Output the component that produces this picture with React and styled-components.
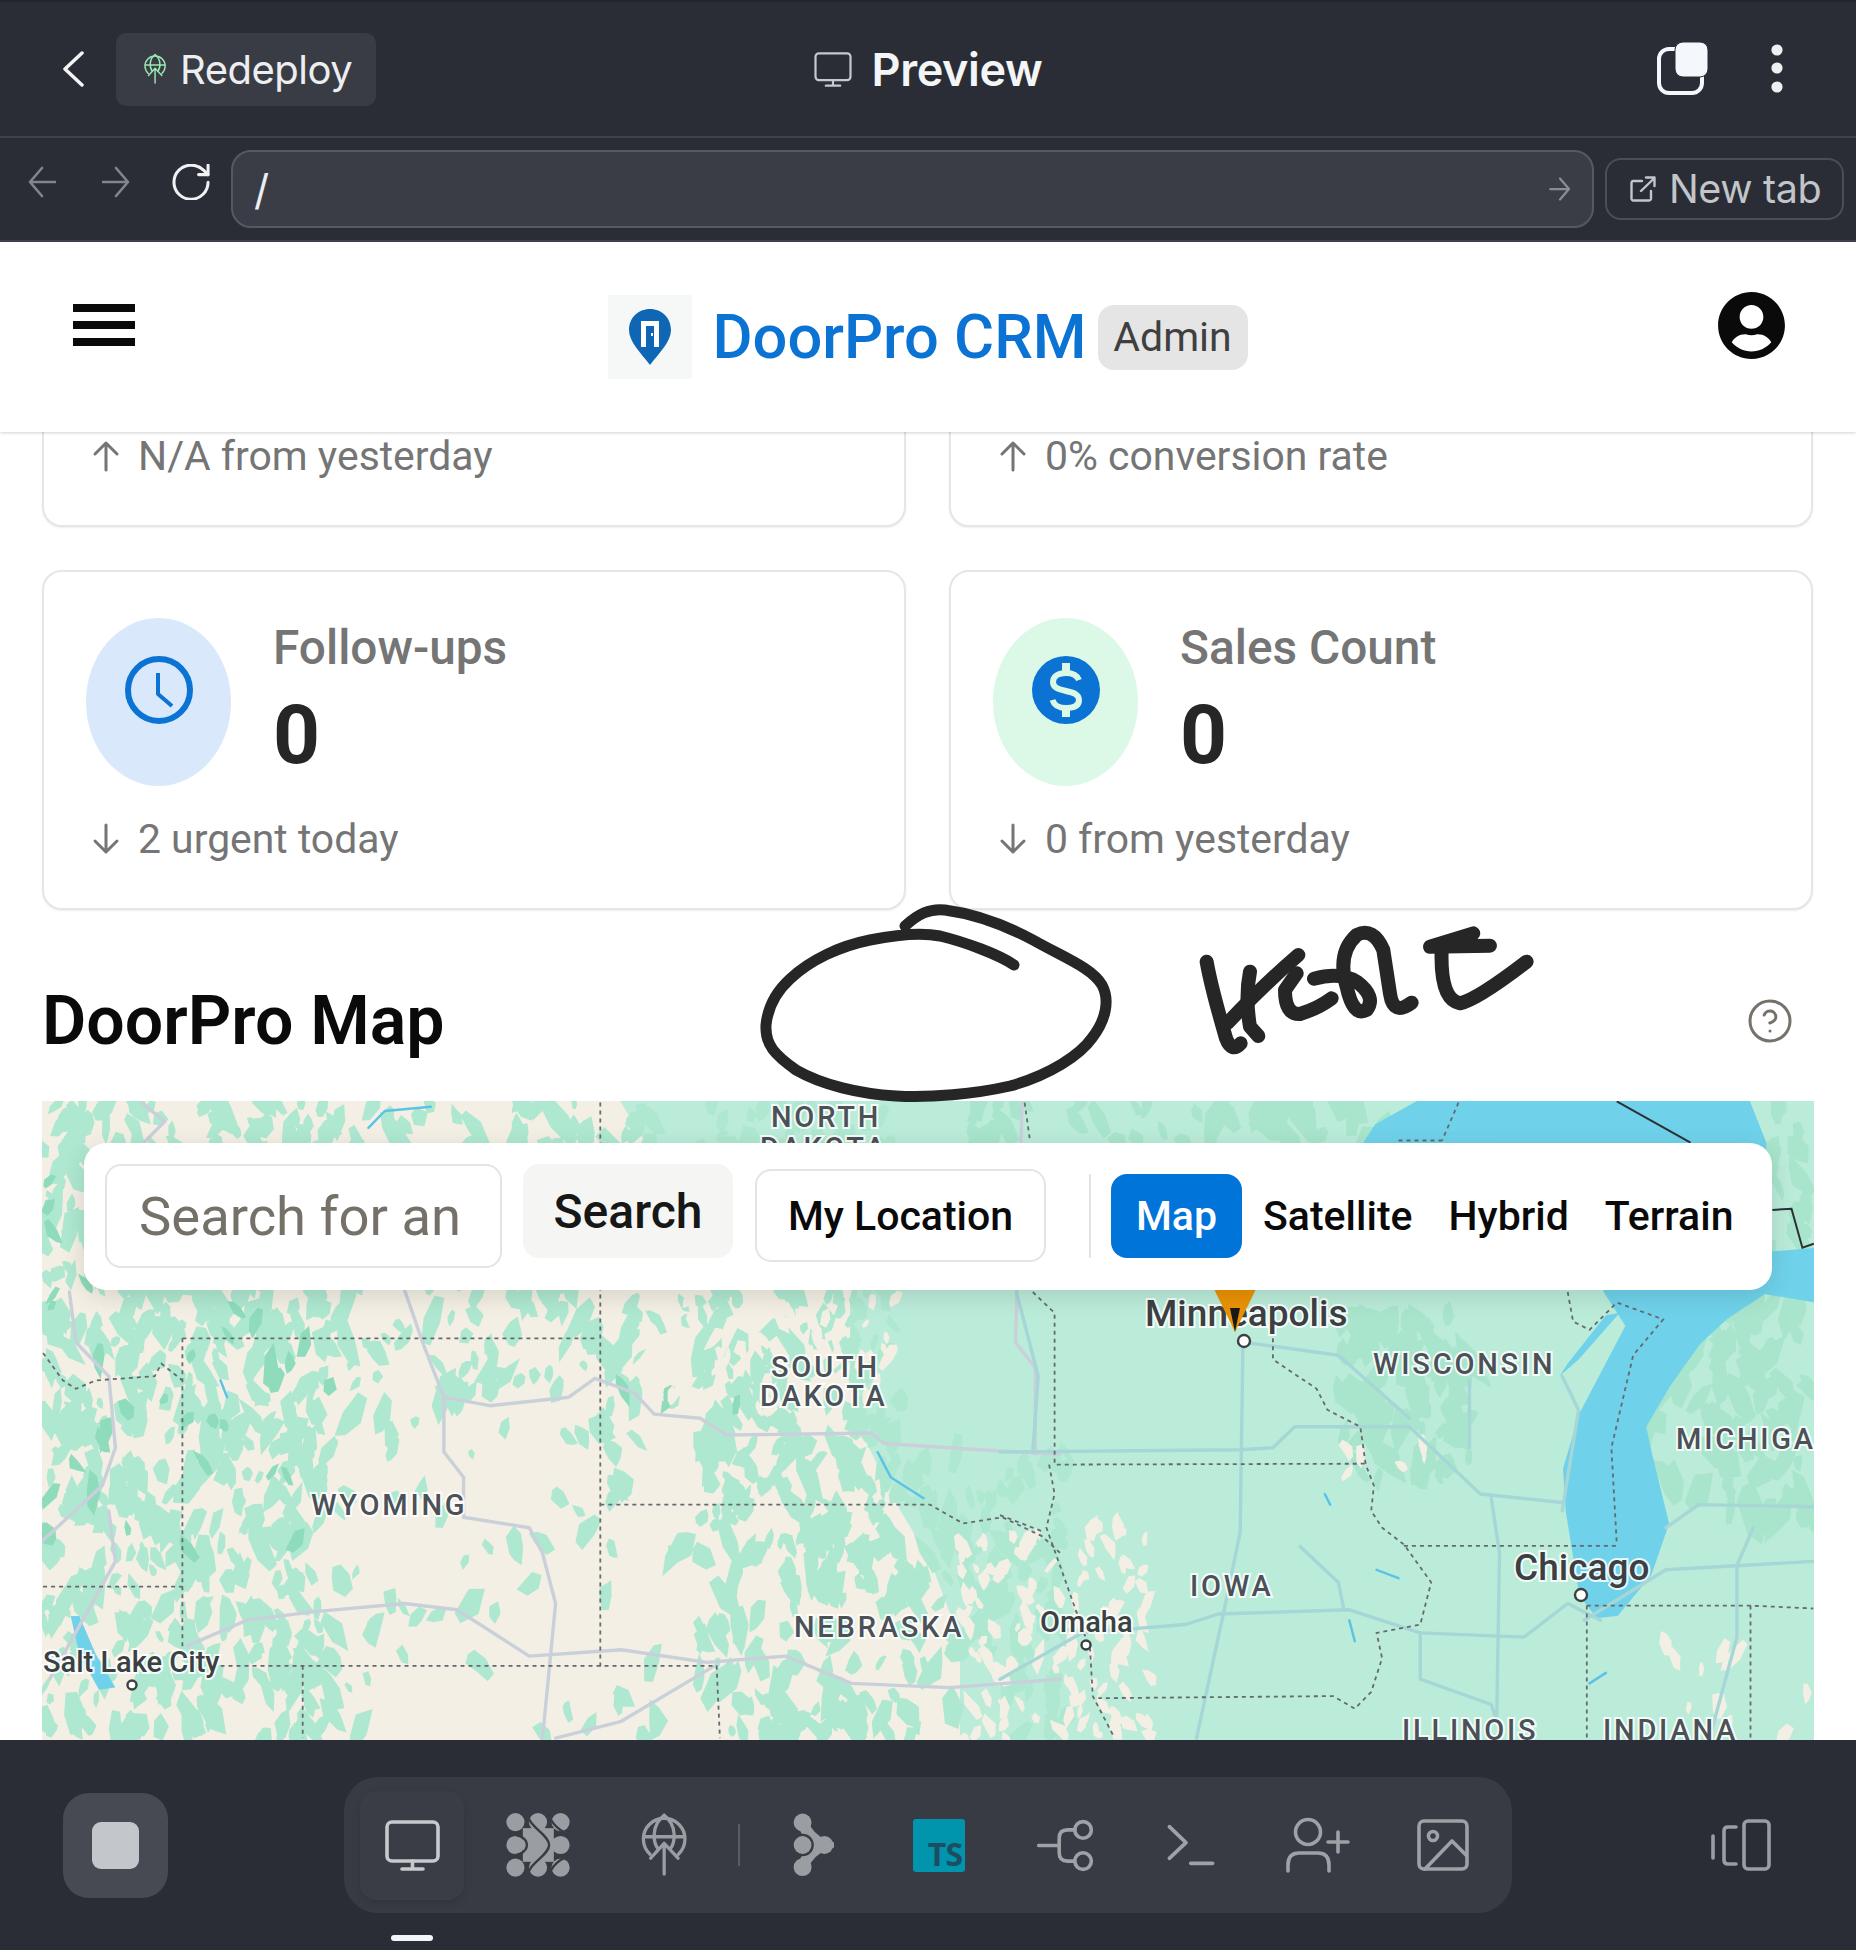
import React from "react";
import styled, { createGlobalStyle } from "styled-components";
import { FaUserCircle } from "react-icons/fa";
import { CircleHelp } from "lucide-react";

const GlobalStyle = createGlobalStyle`
  html, body { margin: 0; padding: 0; background: #fff; }
  body { width: 1856px; height: 1950px; overflow: hidden; font-family: Roboto, "Liberation Sans", sans-serif; }
  * { box-sizing: border-box; }
`;

const Root = styled.div`
  position: relative;
  width: 1856px;
  height: 1950px;
  display: flex;
  flex-direction: column;
  overflow: hidden;
`;

/* ---------- IDE chrome ---------- */
const TopBar = styled.header`
  height: 138px;
  flex: none;
  background: #2a2d35;
  border-top: 2px solid #22242a;
  border-bottom: 2px solid #3f424b;
  display: grid;
  grid-template-columns: 1fr auto 1fr;
  align-items: center;
  font-family: Inter, "Noto Sans", sans-serif;
  color: #f4f5f6;
`;
const TopLeft = styled.div`
  display: flex;
  align-items: center;
  gap: 32px;
  padding-left: 62px;
`;
const RedeployButton = styled.div`
  width: 260px;
  height: 73px;
  border-radius: 10px;
  background: #393c44;
  display: flex;
  align-items: center;
  gap: 13px;
  padding-left: 27px;
  font-size: 40px;
  letter-spacing: -0.5px;
  color: #eceef0;
`;
const PreviewTitle = styled.div`
  display: flex;
  align-items: center;
  gap: 20px;
  font-size: 45px;
  font-weight: 600;
  letter-spacing: -0.4px;
`;
const TopRight = styled.div`
  display: flex;
  justify-content: flex-end;
  align-items: center;
  gap: 62px;
  padding-right: 73px;
`;
const AddressRow = styled.div`
  height: 104px;
  flex: none;
  background: #2a2d35;
  border-bottom: 2px solid #3f424b;
  display: flex;
  align-items: center;
  padding-left: 28px;
  font-family: Inter, "Noto Sans", sans-serif;
`;
const NavSlot = styled.div`
  flex: none;
  display: flex;
  width: ${(p) => p.$w}px;
  margin-top: -15px;
`;
const AddressInput = styled.div`
  width: 1363px;
  height: 78px;
  flex: none;
  margin-right: 11px;
  border: 2px solid #565962;
  border-radius: 20px;
  background: #3a3d45;
  display: flex;
  align-items: center;
  justify-content: space-between;
  padding: 0 21px 0 21px;
  font-size: 42px;
  color: #eceef0;
`;
const NewTabButton = styled.div`
  width: 239px;
  height: 62px;
  flex: none;
  border: 2px solid #4b4e57;
  border-radius: 16px;
  display: flex;
  align-items: center;
  gap: 13px;
  padding-left: 23px;
  color: #c2c5c9;
  font-size: 39.5px;
  letter-spacing: -0.4px;
`;

/* ---------- app header ---------- */
const AppHeader = styled.div`
  height: 190px;
  flex: none;
  position: relative;
  z-index: 2;
  background: #fff;
  box-shadow: 0 1px 3px rgba(0, 0, 0, 0.18);
  display: grid;
  grid-template-columns: 1fr auto 1fr;
  align-items: center;
`;
const Hamburger = styled.div`
  display: flex;
  flex-direction: column;
  gap: 9px;
  width: 62px;
  margin: 0 0 24px 73px;
`;
const HamburgerBar = styled.span`
  display: block;
  height: 8px;
  background: #0a0a0a;
`;
const Brand = styled.div`
  display: flex;
  align-items: center;
`;
const LogoBox = styled.div`
  width: 84px;
  height: 84px;
  background: #f6f7f7;
  display: flex;
  align-items: center;
  justify-content: center;
  margin-right: 20px;
`;
const BrandTitle = styled.div`
  font-size: 61.4px;
  font-weight: 500;
  color: #0a73d4;
  line-height: 84px;
`;
const RoleBadge = styled.div`
  margin-left: 11px;
  width: 150px;
  height: 65px;
  border-radius: 16px;
  background: #e5e5e5;
  color: #3f3f3f;
  font-size: 41px;
  display: flex;
  align-items: center;
  justify-content: center;
`;
const AvatarSlot = styled.div`
  display: flex;
  justify-content: flex-end;
  padding-right: 70px;
  margin-bottom: 24px;
  color: #0a0a0a;
`;

/* ---------- scrolled content ---------- */
const Content = styled.main`
  flex: 1;
  min-height: 0;
  overflow: hidden;
  background: #fff;
`;
const ScrollInner = styled.div`
  margin-top: -245px;
  padding: 0 42px;
`;
const CardGrid = styled.div`
  display: grid;
  grid-template-columns: 864px 864px;
  column-gap: 43px;
  row-gap: 43px;
`;
const StatCard = styled.section`
  height: 340px;
  border: 2px solid #e6e6e6;
  border-radius: 20px;
  background: #fff;
  box-shadow: 0 1px 2px rgba(0, 0, 0, 0.07);
  padding: 47px 41px 45px 42px;
  display: flex;
  flex-direction: column;
  justify-content: flex-end;
`;
const StatTop = styled.div`
  display: flex;
  gap: 42px;
`;
const IconBlob = styled.div`
  width: 145px;
  height: 168px;
  flex: none;
  border-radius: 50%;
  background: ${(p) => p.$bg};
  display: flex;
  justify-content: center;
  padding-top: 38px;
`;
const StatLabel = styled.div`
  font-size: 47.8px;
  font-weight: 500;
  line-height: 60px;
  color: #757575;
`;
const StatValue = styled.div`
  font-size: 82px;
  font-weight: 700;
  line-height: 90px;
  margin-top: 12px;
  color: #262626;
`;
const StatFoot = styled.div`
  margin-top: 29px;
  height: 48px;
  display: flex;
  align-items: center;
  gap: 18px;
  padding-left: 6px;
  font-size: 40.9px;
  color: #757575;
`;
const MapHeading = styled.div`
  height: 191px;
  padding: 31px 20px 0 0;
  display: flex;
  align-items: center;
  justify-content: space-between;
  color: #76716b;
`;
const MapTitle = styled.h2`
  margin: 0;
  font-size: 68px;
  font-weight: 600;
  color: #0a0a0a;
`;
const MapFrame = styled.div`
  position: relative;
  height: 700px;
  overflow: hidden;
`;
const MapCanvas = styled.svg`
  display: block;
`;
const MapLabel = styled.text`
  font-family: Roboto, sans-serif;
  font-size: ${(p) => p.$size || 29}px;
  font-weight: 500;
  letter-spacing: ${(p) => p.$track || 0}px;
  fill: ${(p) => p.$color || "#4c5057"};
  stroke: rgba(255, 255, 255, 0.85);
  stroke-width: 4px;
  paint-order: stroke;
  dominant-baseline: central;
`;
const MapToolbar = styled.div`
  position: absolute;
  top: 42px;
  left: 42px;
  right: 42px;
  height: 147px;
  border-radius: 22px;
  background: #fff;
  box-shadow: 0 6px 24px rgba(0, 0, 0, 0.12);
  display: flex;
  align-items: flex-start;
  padding: 21px 0 0 21px;
`;
const SearchInput = styled.input`
  width: 397px;
  height: 104px;
  flex: none;
  border: 2px solid #e4e4e4;
  border-radius: 16px;
  padding: 0 32px;
  outline: none;
  font-family: Roboto, sans-serif;
  font-size: 54.4px;
  background: #fff;
  &::placeholder { color: #757068; opacity: 1; }
`;
const SearchButton = styled.div`
  margin-left: 21px;
  width: 210px;
  height: 94px;
  flex: none;
  border-radius: 16px;
  background: #f5f5f3;
  color: #171717;
  font-size: 48px;
  font-weight: 500;
  display: flex;
  align-items: center;
  justify-content: center;
`;
const LocationButton = styled.div`
  margin: 5px 0 0 22px;
  width: 291px;
  height: 93px;
  flex: none;
  border: 2px solid #e4e4e4;
  border-radius: 16px;
  color: #0a0a0a;
  font-size: 41px;
  font-weight: 500;
  display: flex;
  align-items: center;
  justify-content: center;
`;
const ToolbarDivider = styled.div`
  margin: 10px 20px 0 43px;
  width: 2px;
  height: 84px;
  background: #e4e4e4;
`;
const ViewGroup = styled.div`
  margin-top: 10px;
  display: flex;
  align-items: center;
`;
const ViewButton = styled.div`
  height: 84px;
  padding: 0 ${(p) => (p.$active ? 0 : 18)}px;
  width: ${(p) => (p.$active ? "131px" : "auto")};
  justify-content: center;
  margin-right: ${(p) => (p.$active ? 3 : 0)}px;
  border-radius: 16px;
  background: ${(p) => (p.$active ? "#0074d9" : "transparent")};
  color: ${(p) => (p.$active ? "#fff" : "#0a0a0a")};
  font-size: 41px;
  font-weight: 500;
  display: flex;
  align-items: center;
`;

/* ---------- bottom dock ---------- */
const BottomBar = styled.footer`
  position: relative;
  z-index: 2;
  height: 210px;
  flex: none;
  background: #2a2d35;
  display: flex;
  align-items: center;
  padding-left: 63px;
`;
const StopButton = styled.div`
  width: 105px;
  height: 105px;
  border-radius: 26px;
  background: #484a53;
  display: flex;
  align-items: center;
  justify-content: center;
  margin-right: 176px;
`;
const StopSquare = styled.span`
  width: 47px;
  height: 47px;
  border-radius: 9px;
  background: #c3c6ca;
`;
const Dock = styled.nav`
  width: 1168px;
  height: 136px;
  border-radius: 34px;
  background: #383b43;
  display: flex;
  align-items: center;
  padding: 0 5px;
  margin-right: 199px;
`;
const DockItem = styled.div`
  width: 126px;
  height: 109px;
  flex: none;
  position: relative;
  display: flex;
  align-items: center;
  justify-content: center;
  &::before {
    content: "";
    display: ${(p) => (p.$active ? "block" : "none")};
    position: absolute;
    inset: 0 11px;
    border-radius: 16px;
    background: #3a3d45;
    box-shadow: 0 3px 8px rgba(0, 0, 0, 0.12);
  }
  & > * { position: relative; }
`;
const DockSep = styled.div`
  width: 23px;
  flex: none;
  display: flex;
  justify-content: center;
  &::after {
    content: "";
    width: 2px;
    height: 42px;
    background: #5a5d66;
  }
`;
const TsTile = styled.div`
  width: 52px;
  height: 53px;
  border-radius: 3px;
  background: #0095ad;
  color: #1d4d60;
  font-size: 32px;
  font-weight: 700;
  letter-spacing: -1px;
  line-height: 1;
  display: flex;
  align-items: flex-end;
  justify-content: flex-end;
  padding: 0 3px 2px 0;
  font-family: "Open Sans", Roboto, sans-serif;
`;
const HomeIndicator = styled.span`
  position: absolute;
  left: 391px;
  top: 195px;
  width: 42px;
  height: 6px;
  border-radius: 3px;
  background: #f2f5fa;
`;
const InkLayer = styled.svg`
  position: absolute;
  left: 760px;
  top: 900px;
  z-index: 1;
  pointer-events: none;
`;

/* ---------- icons ---------- */
const line = { fill: "none", strokeLinecap: "round", strokeLinejoin: "round" };

const Chevron = () => (
  <svg width="22" height="36" viewBox="0 0 22 36" {...line} stroke="#f4f5f6" strokeWidth="3.5">
    <path d="M20 2 L3 18 L20 34" />
  </svg>
);
const Globe = ({ color, w, h, sw = 10 }) => (
  <svg width={w} height={h} viewBox="450 40 145 200" {...line} stroke={color} strokeWidth={sw}>
    <path d="M480 168 A63 63 0 1 1 566 168" />
    <path d="M523 50 C482 80 490 135 505 152" />
    <path d="M523 50 C564 80 556 135 541 152" />
    <path d="M462 115 H585" />
    <path d="M523 228 V135 M482 180 L523 135 L565 180" />
  </svg>
);
const Monitor = ({ color, w, h, sw }) => (
  <svg width={w} height={h} viewBox="0 0 55 51" {...line} stroke={color} strokeWidth={sw}>
    <rect x="2" y="2" width="51" height="39" rx="5" />
    <path d="M27.5 41 V49 M17 49 H38" />
  </svg>
);
const TabsIcon = () => (
  <svg width="52" height="54" viewBox="0 0 52 54">
    <rect x="2" y="7" width="43" height="44" rx="10" fill="none" stroke="#f4f7fb" strokeWidth="4" />
    <rect x="18" y="0" width="33" height="35" rx="8" fill="#f4f7fb" stroke="#2a2d35" strokeWidth="1" />
  </svg>
);
const DotsIcon = () => (
  <svg width="12" height="50" viewBox="0 0 12 50" fill="#eef0f2">
    <circle cx="6" cy="6" r="5.6" />
    <circle cx="6" cy="24" r="5.6" />
    <circle cx="6" cy="43" r="5.6" />
  </svg>
);
const HArrow = ({ dir, w = 28, h = 32, color = "#83858b", sw = 2.6 }) => (
  <svg width={w} height={h} viewBox="0 0 28 32" {...line} stroke={color} strokeWidth={sw}>
    {dir === "left" ? <path d="M27 16 H2 M14 2 L2 16 L14 30" /> : <path d="M1 16 H26 M14 2 L26 16 L14 30" />}
  </svg>
);
const RefreshIcon = () => (
  <svg width="38" height="36" viewBox="2.4 2.4 19.2 19" {...line} stroke="#f0f1f3" strokeWidth="1.6">
    <path d="M21 12a9 9 0 1 1-9-9c2.52 0 4.93 1 6.74 2.74L21 8" />
    <path d="M21 3v5h-5" />
  </svg>
);
const ExternalIcon = () => (
  <svg width="26" height="26" viewBox="0 0 26 26" {...line} stroke="#c2c5c9" strokeWidth="2.4">
    <path d="M12 5 H3 A2 2 0 0 0 1.5 7 V23 A2 2 0 0 0 3 24.5 H19 A2 2 0 0 0 21 23 V15" />
    <path d="M11 15 L24.5 2 M16 1.5 H24.5 V10" />
  </svg>
);
const PinLogo = () => (
  <svg width="42" height="56" viewBox="0 0 42 56">
    <path d="M21 0 C33 0 42 9 42 21 C42 33 30 44 21 56 C12 44 0 33 0 21 C0 9 9 0 21 0 Z" fill="#0e66b4" />
    <path d="M12 38 V12 H30 V38 H25 V17 H17 V38 Z" fill="#fff" />
    <rect x="22" y="24" width="2" height="3" fill="#fff" />
  </svg>
);
const ClockIcon = () => (
  <svg width="68" height="68" viewBox="0 0 68 68" {...line} stroke="#0a73d4">
    <circle cx="34" cy="34" r="31" strokeWidth="6" />
    <path d="M33 17 V38 L47 50" strokeWidth="4" strokeLinecap="butt" />
  </svg>
);
const DollarIcon = () => (
  <svg width="68" height="68" viewBox="0 0 68 68">
    <circle cx="34" cy="34" r="34" fill="#0a73d4" />
    <path
      d="M47 24 C45 19 40 17 34 17 C27 17 21 20 21 26 C21 32 27 33.5 34 35 C41 36.5 47 38 47 44 C47 50 41 52 34 52 C27 52 22 49 20.5 44"
      fill="none"
      stroke="#dcf9e8"
      strokeWidth="6"
    />
    <path d="M34 7 V61" stroke="#dcf9e8" strokeWidth="8" strokeDasharray="9 36 9" />
  </svg>
);
const SmallArrow = ({ up }) => (
  <svg width="28" height="32" viewBox="0 0 28 32" {...line} stroke="#757575" strokeWidth="3">
    {up ? <path d="M14 30 V3 M3 14 L14 3 L25 14" /> : <path d="M14 2 V29 M3 18 L14 29 L25 18" />}
  </svg>
);
const ClusterIcon = () => (
  <svg width="64" height="64" viewBox="50 45 190 190">
    <g fill="#9a9da2">
      {[78, 145, 212].map((x) =>
        [72, 140, 207].map((y) => <circle key={`${x}-${y}`} cx={x} cy={y} r="27" />)
      )}
      <rect x="100" y="90" width="92" height="100" />
      <rect x="130" y="60" width="30" height="160" />
    </g>
    <g fill="none" stroke="#383b43" strokeWidth="7" strokeLinecap="round">
      <path d="M44 106 C85 106 112 118 112 140 C112 162 85 174 44 174" />
      <path d="M112 40 C112 85 178 108 178 140 C178 172 112 195 112 240" />
      <path d="M178 40 C178 75 215 106 245 106" />
      <path d="M178 240 C178 205 215 174 245 174" />
    </g>
  </svg>
);
const AgentIcon = () => (
  <svg width="41" height="64" viewBox="908 45 124 190" fill="#9a9da2">
    <circle cx="937" cy="72" r="27" />
    <circle cx="937" cy="207" r="27" />
    <circle cx="1003" cy="140" r="27" />
    <path d="M937 72 Q955 122 1003 140 Q955 158 937 207" fill="none" stroke="#9a9da2" strokeWidth="34" />
    <circle cx="937" cy="140" r="34" fill="#383b43" />
    <circle cx="937" cy="140" r="27" />
  </svg>
);
const BranchIcon = () => (
  <svg width="58" height="53" viewBox="410 45 175 160" {...line} stroke="#9ea1a6" strokeWidth="11">
    <circle cx="552" cy="78" r="25" />
    <circle cx="552" cy="172" r="25" />
    <path d="M527 78 H505 Q480 78 480 103 V147 Q480 172 505 172 H527 M418 125 H480" />
  </svg>
);
const TerminalIcon = () => (
  <svg width="50" height="44" viewBox="800 60 150 130" {...line} stroke="#9ea1a6" strokeWidth="11">
    <path d="M810 70 L860 118 L810 165 M874 180 H940" />
  </svg>
);
const UserPlusIcon = () => (
  <svg width="65" height="56" viewBox="1285 1818 65 56" {...line} stroke="#9ea1a6" strokeWidth="3.6">
    <circle cx="1308" cy="1833" r="12.5" />
    <path d="M1288 1872 V1866 Q1288 1854 1299 1854 H1318 Q1329 1854 1329 1866 V1872" />
    <path d="M1338 1833 V1853 M1328 1843 H1348" />
  </svg>
);
const ImageIcon = () => (
  <svg width="52" height="52" viewBox="1418 1820 52 52" {...line} stroke="#9ea1a6" strokeWidth="3.6">
    <rect x="1420" y="1822" width="48" height="48" rx="5" />
    <circle cx="1434" cy="1837" r="4.5" />
    <path d="M1426 1870 L1453 1842 L1467 1856" />
  </svg>
);
const SplitIcon = () => (
  <svg width="60" height="52" viewBox="1711 1821 60 52" {...line} stroke="#9a9da2" strokeWidth="3.6">
    <path d="M1713 1838 V1860" />
    <path d="M1736 1829 H1728 Q1724 1829 1724 1833 V1862 Q1724 1866 1728 1866 H1736" />
    <rect x="1744" y="1823" width="25" height="48" rx="4" />
  </svg>
);

/* ---------- map drawing ---------- */
const p7 = ([x, y]) => [30 + x / 1.522, 1090 + y / 2.376];
const p8 = ([x, y]) => [1000 + x / 1.832, 1090 + y / 2.376];
const toPath = (pts, f, close) =>
  "M" + pts.map((q) => f(q).map((v) => v.toFixed(1)).join(" ")).join(" L") + (close ? " Z" : "");

const makeRng = (s) => () => (s = (s * 16807) % 2147483647) / 2147483647;

function shards(seed, count, density, minS, maxS) {
  const r = makeRng(seed);
  let d = "";
  for (let i = 0; i < count; i++) {
    const x = 42 + r() * 1772;
    const y = 1101 + r() * 640;
    if (r() > density(x, y)) continue;
    const w = minS + r() * (maxS - minS);
    const h = w * (1.3 + r() * 1.6);
    const tilt = (r() - 0.5) * 1.4;
    const n = 5 + Math.floor(r() * 3);
    const pts = [];
    for (let k = 0; k < n; k++) {
      const a = (k / n) * Math.PI * 2;
      const m = 0.55 + r() * 0.6;
      const px = Math.cos(a) * w * m;
      const py = Math.sin(a) * h * m;
      pts.push(
        (x + px * Math.cos(tilt) - py * Math.sin(tilt)).toFixed(1) +
          " " +
          (y + px * Math.sin(tilt) + py * Math.cos(tilt)).toFixed(1)
      );
    }
    d += "M" + pts.join(" L") + " Z";
  }
  return d;
}

const westDensity = (x, y) => {
  if (x < 340) return 0.85;
  if (x < 640 && y < 1400) return 0.5;
  if (x < 700) return 0.13;
  if (x < 900 && y < 1600) return 0.85;
  if (x < 1070 && y >= 1450) return 0.6;
  return 0;
};
const forestPatches = shards(12345, 4200, westDensity, 4, 12);
const darkPatches = shards(777, 1500, (x, y) => (x < 340 && y > 1150 && y < 1560 ? 0.3 : x > 620 && x < 760 && y > 1340 && y < 1420 ? 0.12 : 0), 4, 9);
const clearings = shards(4242, 6000, (x, y) => ((x > 960 && x < 1150 && y > 1520) ? 0.5 : x > 640 && x < 900 && y < 1420 && y > 1290 ? 0.35 : (x > 1650 && y > 1640) || (x > 1340 && x < 1460 && y > 1440 && y < 1500) ? 0.12 : 0), 3, 8);
const northWoods = shards(909, 5000, (x, y) => ((y < 1143 && x > 960 && x < 1400) || (x > 1340 && x < 1480 && y < 1480 && y > 1300) || (x > 1620 && y < 1520 && y > 1290) || (x > 1760 && y < 1300) ? 0.55 : 0), 5, 14);

const greenland = [[620,1101],[1815,1101],[1815,1741],[960,1741],[960,1640],[930,1560],[900,1510],[870,1450],[850,1380],[850,1300],[800,1200],[650,1150]];
const lakes = [[670,125],[690,85],[770,27],[1370,27],[1400,125],[1400,390],[1491,380],[1491,500],[1400,480],[1330,540],[1280,600],[1225,700],[1180,800],[1190,860],[1222,1030],[1190,1150],[1130,1245],[1095,1250],[1065,1200],[1040,1000],[1035,900],[1065,770],[1150,560],[1110,480],[1050,300],[900,125]];
const greenBay = [[1025,680],[1040,650],[1110,535],[1135,530],[1060,640]];
const saltLake = [[62,1250],[75,1250],[100,1340],[130,1420],[105,1425],[75,1340]];

const roads7 = [
  [[170,30],[205,75],[170,130]],
  [[570,475],[600,610],[630,730],[700,750],[820,730],[860,685],[920,720],[950,770],[1020,780],[1060,820],[1280,815],[1300,840],[1500,860],[1568,865]],
  [[630,730],[630,860],[660,920],[660,1015],[760,1040],[780,1100],[800,1220],[780,1540]],
  [[240,1320],[330,1260],[430,1240],[570,1220],[650,1235],[760,1345],[900,1330],[1030,1360],[1150,1345],[1250,1410],[1400,1420],[1568,1400]],
  [[1510,30],[1500,600],[1530,660],[1530,865]],
  [[60,480],[70,600],[120,680],[130,850],[110,940],[20,1070]],
  [[120,1000],[130,1120],[30,1400]],
  [[800,1540],[900,1500],[1040,1370]],
];
const roads8 = [
  [[30,480],[70,680],[60,860]],
  [[0,860],[440,855],[500,850],[540,800],[750,800],[880,960],[1030,980]],
  [[445,610],[440,1050],[410,1240],[360,1540]],
  [[450,600],[620,630],[750,780]],
  [[0,1400],[150,1290],[340,1270],[400,1245],[640,1235],[770,1290],[960,1300],[1040,1220],[1100,1260]],
  [[900,970],[915,1100],[910,1500]],
  [[1490,1120],[1220,1140],[1070,1260]],
  [[1490,990],[1280,985],[1220,1040]],
  [[1380,1040],[1350,1130],[1350,1300],[1300,1540]],
  [[1030,680],[1060,760],[1030,1000]],
  [[860,690],[860,850]],
  [[550,1085],[620,1170],[630,1235]],
  [[770,1290],[770,1400],[900,1460],[910,1500]],
];
const borders7 = [
  [[232,590],[860,590]],
  [[232,590],[232,1340]],
  [[868,30],[868,1370]],
  [[868,985],[1370,985],[1420,1030],[1480,1015],[1540,1060],[1568,1100]],
  [[290,1368],[1045,1368],[1050,1540]],
  [[415,1368],[415,1540]],
  [[20,1180],[232,1180]],
  [[20,625],[50,690],[70,710],[100,690],[190,680],[200,650],[232,690]],
];
const borders8 = [
  [[45,30],[55,120]],
  [[60,480],[100,530],[100,890],[670,888]],
  [[90,890],[100,960],[85,1040],[110,1130],[140,1240],[165,1330],[170,1440],[210,1540]],
  [[0,1010],[80,1050]],
  [[500,590],[500,640],[580,710],[600,760],[660,800],[670,890],[685,940],[680,1000],[700,1040],[740,1080],[790,1170],[770,1270],[690,1290],[700,1350],[680,1430],[650,1470],[610,1440],[180,1445]],
  [[740,1083],[1130,1083]],
  [[1075,1225],[1375,1225],[1490,1232]],
  [[1075,1225],[1075,1540]],
  [[1375,1225],[1375,1540]],
  [[840,30],[810,120]],
  [[730,120],[810,120]],
  [[1040,480],[1050,550],[1080,570],[1130,505],[1215,545],[1160,630],[1120,850],[1130,1080]],
];
const streams = [
  [p7, [[515,90],[540,50],[610,40]]],
  [p7, [[290,690],[300,730]]],
  [p7, [[1290,860],[1310,920],[1360,970]]],
  [p8, [[595,960],[605,985]]],
  [p8, [[690,1140],[730,1160]]],
  [p8, [[640,1260],[650,1310]]],
  [p8, [[1080,1410],[1110,1385]]],
];

const MapArt = () => (
  <MapCanvas width="1772" height="700" viewBox="42 1101 1772 700">
    <rect x="42" y="1101" width="1774" height="700" fill="#f3efe4" />
    <path d={toPath(greenland, (q) => q, true)} fill="#bbecd9" />
    <path d={forestPatches} fill="#aee8d0" />
    <path d={darkPatches} fill="#8edcbc" />
    <path d={northWoods} fill="#a8e5cc" />
    <path d={clearings} fill="#f3efe4" />
    <path d={toPath(lakes, p8, true)} fill="#6fd2ea" strokeLinejoin="round" stroke="#6fd2ea" strokeWidth="4" />
    <path d={toPath(greenBay, p8, true)} fill="#6fd2ea" />
    <path d={toPath(saltLake, p7, true)} fill="#6fd2ea" />
    <g {...line} stroke="#c9d0da" strokeWidth="3.4">
      {roads7.map((r, i) => <path key={i} d={toPath(r, p7)} />)}
    </g>
    <g {...line} stroke="#a6d6d6" strokeWidth="3.4">
      {roads8.map((r, i) => <path key={i} d={toPath(r, p8)} />)}
    </g>
    <g {...line} stroke="#5cc3e6" strokeWidth="2.5">
      {streams.map(([f, r], i) => <path key={i} d={toPath(r, f)} />)}
    </g>
    <g fill="none" stroke="#666a70" strokeWidth="1.8" strokeDasharray="4 4">
      {borders7.map((r, i) => <path key={i} d={toPath(r, p7)} />)}
      {borders8.map((r, i) => <path key={i} d={toPath(r, p8)} />)}
    </g>
    <g fill="none" stroke="#2a3036" strokeWidth="2">
      <path d={toPath([[1130,27],[1265,125]], p8)} />
      <path d={toPath([[1415,285],[1450,282],[1470,375],[1491,365]], p8)} />
    </g>
    <MapLabel x="771" y="1117" $track="2.8">NORTH</MapLabel>
    <MapLabel x="760" y="1148" $track="2.8">DAKOTA</MapLabel>
    <MapLabel x="771" y="1367" $track="2.8">SOUTH</MapLabel>
    <MapLabel x="760" y="1396" $track="2.8">DAKOTA</MapLabel>
    <MapLabel x="311" y="1505" $track="2.8">WYOMING</MapLabel>
    <MapLabel x="794" y="1627" $track="2.8">NEBRASKA</MapLabel>
    <MapLabel x="1190" y="1586" $track="2.8">IOWA</MapLabel>
    <MapLabel x="1373" y="1364" $track="2.8">WISCONSIN</MapLabel>
    <MapLabel x="1676" y="1439" $track="2.8">MICHIGAN</MapLabel>
    <MapLabel x="1402" y="1730" $track="2.8">ILLINOIS</MapLabel>
    <MapLabel x="1603" y="1730" $track="2.8">INDIANA</MapLabel>
    <MapLabel x="43" y="1662" $size="29" $color="#3c4043">Salt Lake City</MapLabel>
    <MapLabel x="1040" y="1622" $size="29" $color="#3c4043">Omaha</MapLabel>
    <MapLabel x="1514" y="1567" $size="37" $color="#3c4043">Chicago</MapLabel>
    <MapLabel x="1145" y="1313" $size="37" $color="#3c4043">Minneapolis</MapLabel>
    <g fill="#fff" stroke="#3c4043" strokeWidth="2.4">
      <circle cx="132" cy="1685" r="4.5" />
      <circle cx="1086" cy="1645" r="4.5" />
      <circle cx="1581" cy="1595" r="6" />
      <circle cx="1244" cy="1341" r="6" />
    </g>
    <path d="M1212 1285 L1258 1285 L1235 1332 Z" fill="#ea9205" />
    <path d="M1230 1308 L1240 1308 L1235 1332 Z" fill="#1a1a1a" />
  </MapCanvas>
);

const Ink = () => (
  <InkLayer width="800" height="210" viewBox="760 900 800 210" {...line} stroke="#262626">
    <path
      strokeWidth="11"
      d="M905 926 C918 914 930 908 945 910 C975 914 1005 925 1033 940 C1065 958 1092 968 1102 985 C1110 1000 1106 1020 1092 1038 C1080 1055 1050 1075 1010 1086 C975 1094 930 1098 896 1096 C860 1094 822 1085 796 1070 C775 1055 765 1045 766 1025 C768 1005 778 990 790 979 C810 960 840 946 870 940 C895 935 920 932 940 936 C965 942 1000 955 1014 965"
    />
    <g strokeWidth="42" transform="translate(1190 910) scale(.3333)">
      <path d="M50 155 C65 240 90 320 108 385 Q125 430 152 400" />
      <path d="M325 135 Q220 225 112 340" />
      <path d="M180 185 Q165 260 180 350 L205 378" />
      <path d="M320 190 L285 240 Q285 315 330 312 Q385 295 425 265" />
      <path d="M372 206 Q450 185 500 215 Q560 260 530 300 Q490 322 470 230 Q440 130 500 75 Q550 50 580 120 L600 250 Q610 320 665 278" />
      <path d="M850 70 L720 110 L900 107" />
      <path d="M755 120 Q750 270 810 280 Q860 270 1010 155" />
    </g>
  </InkLayer>
);

const App = () => (
  <Root>
    <GlobalStyle />
    <TopBar>
      <TopLeft>
        <Chevron />
        <RedeployButton>
          <Globe color="#9be9b0" w={24} h={32} sw={9} />
          Redeploy
        </RedeployButton>
      </TopLeft>
      <PreviewTitle>
        <Monitor color="#c6c9cd" w={38} h={35} sw={3.2} />
        Preview
      </PreviewTitle>
      <TopRight>
        <TabsIcon />
        <DotsIcon />
      </TopRight>
    </TopBar>
    <AddressRow>
      <NavSlot $w={74}><HArrow dir="left" /></NavSlot>
      <NavSlot $w={70}><HArrow dir="right" /></NavSlot>
      <NavSlot $w={59}><RefreshIcon /></NavSlot>
      <AddressInput>
        /
        <HArrow dir="right" w={22} h={24} sw={3} color="#8a8c92" />
      </AddressInput>
      <NewTabButton>
        <ExternalIcon />
        New tab
      </NewTabButton>
    </AddressRow>

    <AppHeader>
      <Hamburger>
        <HamburgerBar />
        <HamburgerBar />
        <HamburgerBar />
      </Hamburger>
      <Brand>
        <LogoBox><PinLogo /></LogoBox>
        <BrandTitle>DoorPro CRM</BrandTitle>
        <RoleBadge>Admin</RoleBadge>
      </Brand>
      <AvatarSlot><FaUserCircle size={69} /></AvatarSlot>
    </AppHeader>

    <Content>
      <ScrollInner>
        <CardGrid>
          <StatCard>
            <StatFoot><SmallArrow up />N/A from yesterday</StatFoot>
          </StatCard>
          <StatCard>
            <StatFoot><SmallArrow up />0% conversion rate</StatFoot>
          </StatCard>
          <StatCard>
            <StatTop>
              <IconBlob $bg="#d9e9fb"><ClockIcon /></IconBlob>
              <div>
                <StatLabel>Follow-ups</StatLabel>
                <StatValue>0</StatValue>
              </div>
            </StatTop>
            <StatFoot><SmallArrow />2 urgent today</StatFoot>
          </StatCard>
          <StatCard>
            <StatTop>
              <IconBlob $bg="#dcf9e8"><DollarIcon /></IconBlob>
              <div>
                <StatLabel>Sales Count</StatLabel>
                <StatValue>0</StatValue>
              </div>
            </StatTop>
            <StatFoot><SmallArrow />0 from yesterday</StatFoot>
          </StatCard>
        </CardGrid>
        <MapHeading>
          <MapTitle>DoorPro Map</MapTitle>
          <CircleHelp size={48} strokeWidth={1.5} />
        </MapHeading>
        <MapFrame>
          <MapArt />
          <MapToolbar>
            <SearchInput placeholder="Search for an" readOnly />
            <SearchButton>Search</SearchButton>
            <LocationButton>My Location</LocationButton>
            <ToolbarDivider />
            <ViewGroup>
              <ViewButton $active>Map</ViewButton>
              <ViewButton>Satellite</ViewButton>
              <ViewButton>Hybrid</ViewButton>
              <ViewButton>Terrain</ViewButton>
            </ViewGroup>
          </MapToolbar>
        </MapFrame>
      </ScrollInner>
    </Content>

    <BottomBar>
      <StopButton><StopSquare /></StopButton>
      <Dock>
        <DockItem $active><Monitor color="#c6c9cd" w={55} h={51} sw={3.6} /></DockItem>
        <DockItem><ClusterIcon /></DockItem>
        <DockItem><Globe color="#9a9da2" w={48} h={66} /></DockItem>
        <DockSep />
        <DockItem><AgentIcon /></DockItem>
        <DockItem><TsTile>TS</TsTile></DockItem>
        <DockItem><BranchIcon /></DockItem>
        <DockItem><TerminalIcon /></DockItem>
        <DockItem><UserPlusIcon /></DockItem>
        <DockItem><ImageIcon /></DockItem>
      </Dock>
      <SplitIcon />
      <HomeIndicator />
    </BottomBar>
    <Ink />
  </Root>
);

export default App;
